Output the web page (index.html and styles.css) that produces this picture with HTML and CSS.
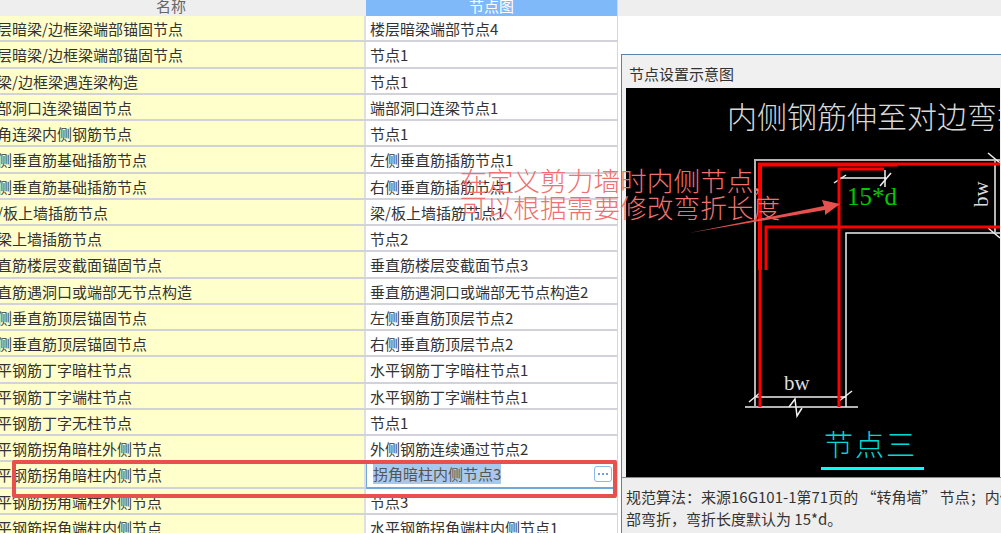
FILE: index.html
```html
<!DOCTYPE html>
<html lang="en">

<head>
    <title>节点设置</title>
    <meta charset="utf-8">
    <link rel="stylesheet" href="styles.css">
</head>

<body>
    <div class="page">
        <div class="grid">
            <div class="head">
                <div class="head-name">名称</div>
                <div class="head-node">节点图</div>
            </div>
            <div class="row"><div class="name">楼层暗梁/边框梁端部锚固节点</div><div class="node">楼层暗梁端部节点4</div></div>
            <div class="row"><div class="name">楼层暗梁/边框梁端部锚固节点</div><div class="node">节点1</div></div>
            <div class="row"><div class="name">连梁/边框梁遇连梁构造</div><div class="node">节点1</div></div>
            <div class="row"><div class="name">端部洞口连梁锚固节点</div><div class="node">端部洞口连梁节点1</div></div>
            <div class="row"><div class="name">转角连梁内侧钢筋节点</div><div class="node">节点1</div></div>
            <div class="row"><div class="name">左侧垂直筋基础插筋节点</div><div class="node">左侧垂直筋插筋节点1</div></div>
            <div class="row"><div class="name">右侧垂直筋基础插筋节点</div><div class="node">右侧垂直筋插筋节点1</div></div>
            <div class="row"><div class="name">梁/板上墙插筋节点</div><div class="node">梁/板上墙插筋节点1</div></div>
            <div class="row"><div class="name">连梁上墙插筋节点</div><div class="node">节点2</div></div>
            <div class="row"><div class="name">垂直筋楼层变截面锚固节点</div><div class="node">垂直筋楼层变截面节点3</div></div>
            <div class="row"><div class="name">垂直筋遇洞口或端部无节点构造</div><div class="node">垂直筋遇洞口或端部无节点构造2</div></div>
            <div class="row"><div class="name">左侧垂直筋顶层锚固节点</div><div class="node">左侧垂直筋顶层节点2</div></div>
            <div class="row"><div class="name">右侧垂直筋顶层锚固节点</div><div class="node">右侧垂直筋顶层节点2</div></div>
            <div class="row"><div class="name">水平钢筋丁字暗柱节点</div><div class="node">水平钢筋丁字暗柱节点1</div></div>
            <div class="row"><div class="name">水平钢筋丁字端柱节点</div><div class="node">水平钢筋丁字端柱节点1</div></div>
            <div class="row"><div class="name">水平钢筋丁字无柱节点</div><div class="node">节点1</div></div>
            <div class="row"><div class="name">水平钢筋拐角暗柱外侧节点</div><div class="node">外侧钢筋连续通过节点2</div></div>
            <div class="row">
                <div class="name">水平钢筋拐角暗柱内侧节点</div>
                <div class="node editing">
                    <span class="picked">拐角暗柱内侧节点3</span>
                    <span class="more"><i></i><i></i><i></i></span>
                </div>
            </div>
            <div class="row"><div class="name">水平钢筋拐角端柱外侧节点</div><div class="node">节点3</div></div>
            <div class="row"><div class="name">水平钢筋拐角端柱内侧节点</div><div class="node">水平钢筋拐角端柱内侧节点1</div></div>
        </div>

        <div class="side">
            <div class="side-head"></div>
            <div class="panel">
                <div class="panel-title">节点设置示意图</div>
                <svg class="drawing" viewBox="627 88 374 389" width="374" height="389">
                    <text class="draw-title" x="728" y="128">内侧钢筋伸至对边弯折</text>

                    <!-- wall outline -->
                    <g class="line-gray">
                        <path d="M756 407V160H1001" />
                        <path d="M996 160V232" />
                        <path d="M746 407H859" />
                        <path d="M756 397H847" />
                    </g>
                    <g class="line-white">
                        <path d="M847 407V233H1001" />
                        <path d="M840 178H887" />
                        <path d="M886 170V187" />
                        <path d="M835 183L847 175" />
                        <path d="M881 186L892 173" />
                        <path d="M989 153L1001 163" />
                        <path d="M989 228L1001 238" />
                        <path d="M750 402L762 392" />
                        <path d="M839 402L853 391" />
                        <path d="M790 407L796 399L798 416L803 408" />
                    </g>

                    <!-- rebar -->
                    <g class="line-red">
                        <path class="thick" d="M761 270V164.500H898" />
                        <path d="M761 270V407" />
                        <path d="M898 164H1001" />
                        <path d="M767 270V227H1001" />
                        <path d="M840 407V169H885" />
                    </g>

                    <text class="dim-green" x="848" y="205">15*d</text>
                    <text class="dim" x="785" y="390">bw</text>
                    <text class="dim" transform="translate(989 207) rotate(-90)">bw</text>
                    <text class="draw-name" x="825" y="456">节点三</text>
                    <rect class="name-line" x="822" y="467" width="103" height="3" />
                </svg>
                <div class="rule">
                    规范算法：来源16G101-1第71页的 “转角墙” 节点；内侧钢筋伸至对边弯折<br>
                    部弯折，弯折长度默认为 15*d。
                </div>
            </div>
        </div>
    </div>

    <!-- marks drawn on top of the screenshot -->
    <div class="mark-box"></div>
    <div class="mark-note">在定义剪力墙时内侧节点,<br>可以根据需要修改弯折长度</div>
    <svg class="mark-arrow" viewBox="0 0 1001 533" width="1001" height="533">
        <polygon points="689,233 824,206 822,200 840,204 825,215 825,210" />
    </svg>
</body>

</html>
```

FILE: styles.css
```css
* {
    padding: 0;
    margin: 0;
    box-sizing: border-box;
}

body {
    width: 1001px;
    height: 533px;
    overflow: hidden;
    position: relative;
    background: #ffffff;
    font-family: "Noto Sans CJK SC", sans-serif;
    font-size: 15px;
    color: #333333;
}

.page {
    display: flex;
    height: 533px;
}

.grid {
    width: 618px;
    flex: none;
    border-right: 1px solid #d6d6de;
}

.head {
    display: flex;
    height: 16px;
    line-height: 11px;
    text-align: center;
    overflow: hidden;
}

.head-name {
    width: 366px;
    background: #eeeeee;
    color: #666666;
    padding-right: 24px;
}

.head-node {
    flex: 1;
    background: #7fb9fa;
    color: #ffffff;
}

.row {
    display: flex;
    height: 26.25px;
    line-height: 25px;
    border-bottom: 2px solid #d2d2da;
    white-space: nowrap;
}

.name {
    width: 366px;
    background: #ffffcc;
    border-right: 2px solid #dfdfdf;
    text-indent: -18px;
    overflow: hidden;
}

.node {
    flex: 1;
    padding-left: 4px;
    overflow: hidden;
}

.editing {
    display: flex;
    align-items: center;
    justify-content: space-between;
    padding: 0 5px 0 6px;
    border-left: 1px solid #6fa8dc;
    border-bottom: 2px solid #6fa8dc;
    margin-bottom: -2px;
}

.picked {
    background: #a9c9ec;
    color: #555555;
    line-height: 20px;
}

.more {
    width: 18px;
    height: 16px;
    display: flex;
    align-items: center;
    justify-content: center;
    gap: 2px;
    border: 1px solid #8db8e8;
    border-radius: 3px;
}

.more i {
    width: 2px;
    height: 2px;
    background: #6fa0dc;
}

.side {
    flex: 1;
    display: flex;
    flex-direction: column;
    min-width: 0;
}

.side-head {
    height: 16px;
    background: #eeeeee;
}

.panel {
    flex: 1;
    margin: 38px 0 0 3px;
    background: #f0f0f0;
    border-top: 1px solid #5f80ad;
    border-left: 1px solid #5f80ad;
    overflow: hidden;
}

.panel-title {
    height: 33px;
    padding-left: 7px;
    line-height: 38px;
    white-space: nowrap;
}

.drawing {
    display: block;
    margin-left: 4px;
    background: #000000;
}

.drawing text {
    font-family: "Noto Sans CJK SC", sans-serif;
    font-weight: 300;
}

.drawing .draw-title {
    font-size: 30px;
    fill: #d8d8d8;
    letter-spacing: 0;
}

.drawing path {
    fill: none;
}

.line-gray path {
    stroke: #b4b4b4;
    stroke-width: 2;
}

.line-white path {
    stroke: #f0f0f0;
    stroke-width: 1.500;
}

.line-red path {
    stroke: #ff0000;
    stroke-width: 3;
}

.line-red .thick {
    stroke-width: 4;
}

.drawing .dim-green {
    font-family: "Liberation Serif", serif;
    font-weight: 400;
    font-size: 25px;
    fill: #00c800;
}

.drawing .dim {
    font-family: "Liberation Serif", serif;
    font-weight: 400;
    font-size: 21px;
    fill: #dddddd;
}

.drawing .draw-name {
    font-size: 29px;
    letter-spacing: 2px;
    fill: #00d8d8;
}

.name-line {
    fill: #00ffff;
}

.rule {
    height: 56px;
    padding-left: 4px;
    border-top: 1px solid #888888;
    line-height: 22px;
    padding-top: 8px;
    white-space: nowrap;
    background: #eeeeee;
}

.mark-box {
    position: absolute;
    left: 12px;
    top: 460px;
    width: 605px;
    height: 38px;
    border: 4px solid #e85050;
    border-radius: 2px;
}

.mark-note {
    position: absolute;
    left: 460px;
    top: 166px;
    font-size: 26.700px;
    font-weight: 300;
    line-height: 27px;
    color: #f07070;
    white-space: nowrap;
}

.mark-arrow {
    position: absolute;
    left: 0;
    top: 0;
}

.mark-arrow polygon {
    fill: #e85050;
}
```
